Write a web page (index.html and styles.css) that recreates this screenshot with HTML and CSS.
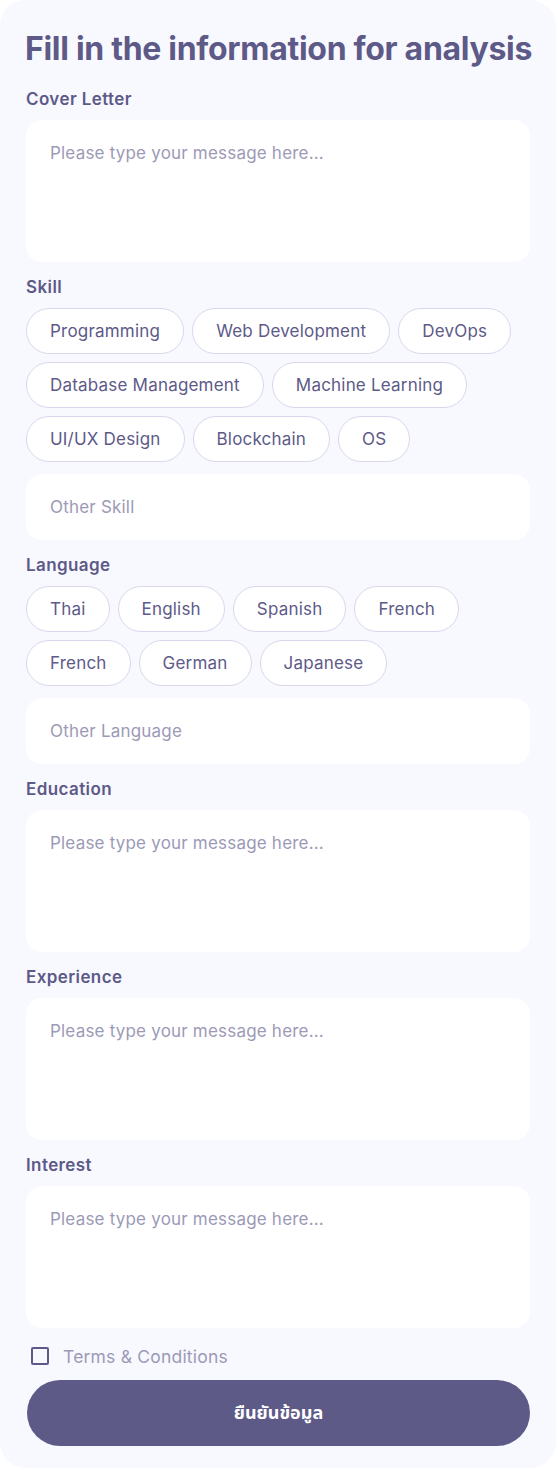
FILE: index.html
```html
<!DOCTYPE html>
<html lang="en">
<head>
<meta charset="utf-8">
<title>Fill in the information for analysis</title>
<link rel="stylesheet" href="styles.css">
</head>
<body>
<form class="card">
  <h1 class="title">Fill in the information for analysis</h1>

  <section class="field">
    <label class="label">Cover Letter</label>
    <div class="area">Please type your message here...</div>
  </section>

  <section class="field">
    <label class="label">Skill</label>
    <div class="chips">
      <span class="chip">Programming</span>
      <span class="chip">Web Development</span>
      <span class="chip">DevOps</span>
      <span class="chip">Database Management</span>
      <span class="chip">Machine Learning</span>
      <span class="chip">UI/UX Design</span>
      <span class="chip">Blockchain</span>
      <span class="chip">OS</span>
    </div>
    <div class="input">Other Skill</div>
  </section>

  <section class="field">
    <label class="label">Language</label>
    <div class="chips">
      <span class="chip">Thai</span>
      <span class="chip">English</span>
      <span class="chip">Spanish</span>
      <span class="chip">French</span>
      <span class="chip">French</span>
      <span class="chip">German</span>
      <span class="chip">Japanese</span>
    </div>
    <div class="input">Other Language</div>
  </section>

  <section class="field">
    <label class="label">Education</label>
    <div class="area">Please type your message here...</div>
  </section>

  <section class="field">
    <label class="label">Experience</label>
    <div class="area">Please type your message here...</div>
  </section>

  <section class="field">
    <label class="label">Interest</label>
    <div class="area">Please type your message here...</div>
  </section>

  <div class="terms">
    <span class="box"></span>
    <span class="terms-text">Terms &amp; Conditions</span>
  </div>

  <button type="button" class="submit">ยืนยันข้อมูล</button>
</form>
</body>
</html>
```

FILE: styles.css
```css
html, body {
  margin: 0;
  padding: 0;
  background: #ffffff;
}

body {
  font-family: "Inter", "Noto Sans", "DejaVu Sans", sans-serif;
  color: #5d5a88;
}

.card {
  width: 556px;
  box-sizing: border-box;
  background: #f8f8ff;
  border-radius: 26px;
  padding: 29px 26px 22px 26px;
  display: flex;
  flex-direction: column;
}

.card > * {
  flex-shrink: 0;
}

.title {
  margin: 0 0 20px -1px;
  font-size: 32px;
  line-height: 40px;
  font-weight: 700;
  letter-spacing: -0.3px;
  color: #5d5a88;
  white-space: nowrap;
}

.field {
  display: flex;
  flex-direction: column;
  margin-bottom: 15px;
}

.label {
  font-size: 17px;
  line-height: 20px;
  font-weight: 600;
  letter-spacing: 0.4px;
  color: #5d5a88;
  margin-bottom: 11px;
}

.area {
  height: 142px;
  box-sizing: border-box;
  background: #ffffff;
  border-radius: 16px;
  padding: 23px 24px;
  font-size: 17px;
  line-height: 20px;
  color: #9c9ab6;
  letter-spacing: 0.2px;
}

.input {
  height: 66px;
  box-sizing: border-box;
  background: #ffffff;
  border-radius: 16px;
  padding: 0 24px;
  display: flex;
  align-items: center;
  font-size: 17px;
  letter-spacing: 0.2px;
  color: #9c9ab6;
  margin-top: 12px;
}

.chips {
  display: flex;
  flex-wrap: wrap;
  gap: 8px;
}

.chip {
  height: 46px;
  box-sizing: border-box;
  padding: 0 23px;
  border: 1px solid #d9d7ec;
  border-radius: 23px;
  background: #ffffff;
  display: inline-flex;
  align-items: center;
  font-size: 17px;
  color: #5d5a88;
  letter-spacing: 0.2px;
}

.terms {
  display: flex;
  align-items: center;
  gap: 14px;
  padding-left: 5px;
  margin-top: 3px;
  height: 20px;
}

.box {
  width: 18px;
  height: 18px;
  box-sizing: border-box;
  border: 2px solid #5d5a88;
  border-radius: 2px;
}

.terms-text {
  font-size: 17.5px;
  letter-spacing: 0.2px;
  color: #9c9ab6;
}

.submit {
  margin-top: 14px;
  margin-left: 1px;
  width: 503px;
  height: 66px;
  border: none;
  border-radius: 33px;
  background: #5d5a88;
  color: #ffffff;
  font-family: "Noto Sans", "Noto Sans Thai", "DejaVu Sans", sans-serif;
  font-size: 18px;
  font-weight: 700;
}
```
